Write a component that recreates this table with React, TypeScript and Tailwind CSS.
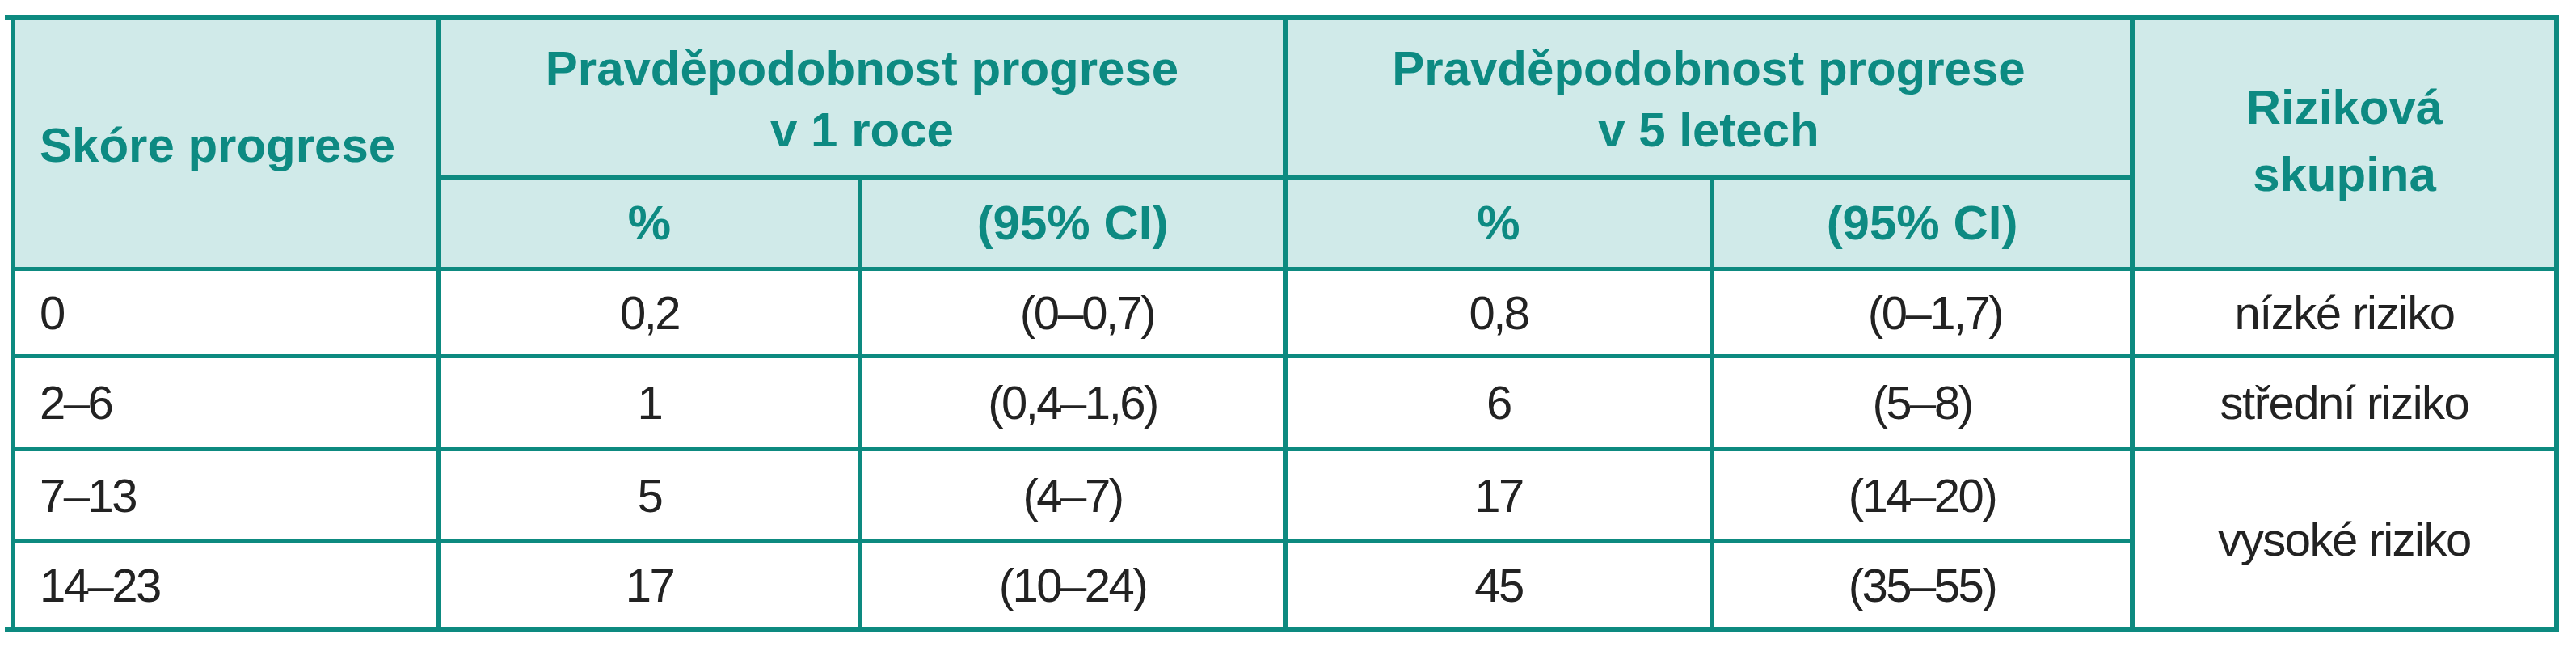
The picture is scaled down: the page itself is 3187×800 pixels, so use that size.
import React from "react";

const head = "bg-[#d0eae9] text-[#0d8a82] font-bold text-[60px] leading-none flex items-center justify-center text-center";
const cell = "bg-white text-[#222222] text-[58px] leading-none flex items-center justify-center";
const num = "tracking-[-2.5px]";
const word = "tracking-[-1.5px]";

const rows: { s: string; a: string; b: string; c: string; d: string; r?: string }[] = [
  { s: "0", a: "0,2", b: "(0–0,7)", c: "0,8", d: "(0–1,7)", r: "nízké riziko" },
  { s: "2–6", a: "1", b: "(0,4–1,6)", c: "6", d: "(5–8)", r: "střední riziko" },
  { s: "7–13", a: "5", b: "(4–7)", c: "17", d: "(14–20)", r: "vysoké riziko" },
  { s: "14–23", a: "17", b: "(10–24)", c: "45", d: "(35–55)" },
];

export default function App() {
  return (
    <div
      className="w-[3187px] h-[800px] bg-white overflow-hidden"
      style={{ fontFamily: '"Liberation Sans", Arial, sans-serif' }}
    >
      <div className="ml-[6px] mt-[19px] w-[3160px]">
        <div className="h-[6px] bg-[#0d8a80]" />
        <div className="flex">
          <div className="w-[7px] shrink-0" />
          <div className="grid grid-cols-[521px_515px_520px_522px_514px_519px] grid-rows-[192px_108px_103px_110px_109px_103px] gap-x-[6px] gap-y-[5px] px-[6px] bg-[#0d8a80] w-[3153px]">
            <div className={`${head} row-span-2 justify-start pl-[30px] pt-[4px]`}>Skóre progrese</div>
            <div className={`${head} col-span-2 flex-col gap-[16px] pt-[4px]`}>
              <span className="block h-[60px]">Pravděpodobnost progrese</span>
              <span className="block h-[60px]">v 1 roce</span>
            </div>
            <div className={`${head} col-span-2 flex-col gap-[16px] pt-[4px]`}>
              <span className="block h-[60px]">Pravděpodobnost progrese</span>
              <span className="block h-[60px]">v 5 letech</span>
            </div>
            <div className={`${head} row-span-2 flex-col gap-[23px] pb-[6px]`}>
              <span className="block h-[60px]">Riziková</span>
              <span className="block h-[60px]">skupina</span>
            </div>
            <div className={head}>%</div>
            <div className={head}>(95% CI)</div>
            <div className={head}>%</div>
            <div className={head}>(95% CI)</div>

            {rows.map((r, i) => (
              <React.Fragment key={i}>
                <div className={`${cell} ${num} justify-start pl-[30px]`}>{r.s}</div>
                <div className={`${cell} ${num}`}>{r.a}</div>
                <div className={`${cell} ${num} ${i === 0 ? "pl-[36px]" : ""}`}>{r.b}</div>
                <div className={`${cell} ${num}`}>{r.c}</div>
                <div className={`${cell} ${num} ${i === 0 ? "pl-[32px]" : ""}`}>{r.d}</div>
                {r.r && (
                  <div className={`${cell} ${word} ${i === 2 ? "row-span-2" : ""}`}>{r.r}</div>
                )}
              </React.Fragment>
            ))}
          </div>
        </div>
        <div className="h-[6px] bg-[#0d8a80]" />
      </div>
    </div>
  );
}
